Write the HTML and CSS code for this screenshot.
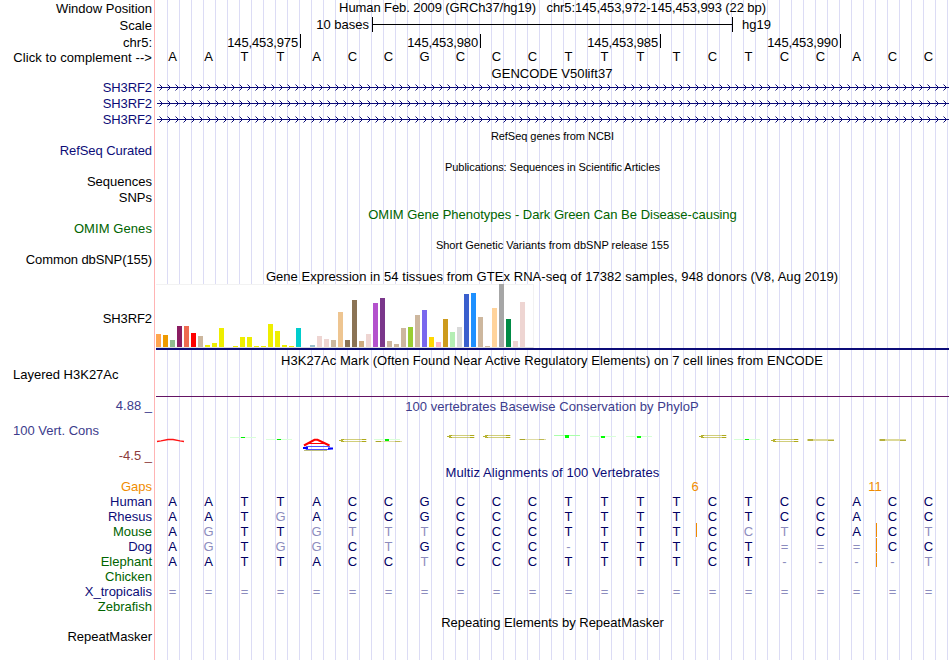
FILE: index.html
```html
<!DOCTYPE html>
<html lang="en">
<head>
  <meta charset="UTF-8" />
  <title>chr5:145,453,972-145,453,993</title>
  <link rel="stylesheet" href="styles.css">
</head>

<body>
  <main class="browser">
    <div class="row h17">
      <div class="label">Window Position</div>
      <div class="track title up"><span class="t-pos">Human Feb. 2009 (GRCh37/hg19) &nbsp; chr5:145,453,972-145,453,993 (22 bp)</span></div>
    </div>
    <div class="row h17">
      <div class="label">Scale</div>
      <div class="track scale up">
        <span class="scale-size">10 bases</span>
        <span class="scale-bar"></span>
        <span>hg19</span>
      </div>
    </div>
    <div class="row">
      <div class="label">chr5:</div>
      <div class="track ruler">
        <span>145,453,975</span><span>145,453,980</span><span>145,453,985</span><span>145,453,990</span>
      </div>
    </div>
    <div class="row h15">
      <div class="label t-click">Click to complement --&gt;</div>
      <div class="track bases black" data-seq="AATTACCGCCCTTTTCTCCACC"></div>
    </div>

    <div class="row h14"><div class="label"></div><div class="track title"><span class="t-gencode">GENCODE V50lift37</span></div></div>
    <div class="row gene"><div class="label">SH3RF2</div><div class="track"></div></div>
    <div class="row gene"><div class="label">SH3RF2</div><div class="track"></div></div>
    <div class="row gene"><div class="label">SH3RF2</div><div class="track"></div></div>

    <div class="row"><div class="label"></div><div class="track title small"><span class="t-refseq">RefSeq genes from NCBI</span></div></div>
    <div class="row h15"><div class="label navy t-curated">RefSeq Curated</div><div class="track"></div></div>
    <div class="row"><div class="label"></div><div class="track title small"><span class="t-pubs">Publications: Sequences in Scientific Articles</span></div></div>
    <div class="row"><div class="label up">Sequences</div><div class="track"></div></div>
    <div class="row"><div class="label up">SNPs</div><div class="track"></div></div>
    <div class="row h15"><div class="label"></div><div class="track title down green"><span class="t-omim">OMIM Gene Phenotypes - Dark Green Can Be Disease-causing</span></div></div>
    <div class="row h15"><div class="label green t-omim-label">OMIM Genes</div><div class="track"></div></div>
    <div class="row"><div class="label"></div><div class="track title small"><span class="t-dbsnp">Short Genetic Variants from dbSNP release 155</span></div></div>
    <div class="row h15"><div class="label t-common">Common dbSNP(155)</div><div class="track"></div></div>

    <div class="row h17"><div class="label"></div><div class="track title low"><span class="t-gtex">Gene Expression in 54 tissues from GTEx RNA-seq of 17382 samples, 948 donors (V8, Aug 2019)</span></div></div>
    <div class="row gtex">
      <div class="label">SH3RF2</div>
      <div class="track"><div class="bars" id="gtex-bars"></div></div>
    </div>

    <div class="row h17 h3k-title"><div class="label"></div><div class="track title"><span class="t-h3k">H3K27Ac Mark (Often Found Near Active Regulatory Elements) on 7 cell lines from ENCODE</span></div></div>
    <div class="row h3k"><div class="label left">Layered H3K27Ac</div><div class="track"></div></div>

    <div class="row cons">
      <div class="label">
        <span class="max">4.88 _</span>
        <span class="name">100 Vert. Cons</span>
        <span class="min">-4.5 _</span>
      </div>
      <div class="track">
        <div class="title"><span class="t-phylop">100 vertebrates Basewise Conservation by PhyloP</span></div>
        <!-- sequence logo, letters squashed to their score -->
        <svg class="logo" width="795" height="49" viewBox="0 0 795 49">
          <defs>
            <g id="t">
              <rect x="0" y="0" width="26" height="1" fill="#d9ffd9" />
              <rect x="11" y="0" width="4" height="1" fill="#00f000" />
            </g>
            <g id="c" fill="none" stroke="#b9b432">
              <path d="M27.5 .5H4M27.5 2.5H4" opacity=".65" />
              <path d="M5 .5H2M5 2.5H2M0 1.5H4M23 .5H27M23 2.5H27" stroke="#a5a000" opacity=".8" />
            </g>
            <g id="flat">
              <rect width="27" height="2" fill="#dcd999" />
              <rect x="1" width="5" height="2" fill="#b4af3c" />
              <rect x="21" y="1" width="6" height="1" fill="#b4af3c" />
            </g>
            <g id="thin">
              <rect width="27" height="1" fill="#dedba5" />
              <rect x="1" width="5" height="1" fill="#aaa528" />
              <rect x="20" width="5" height="1" fill="#beb950" />
            </g>
          </defs>
          <path d="M2 27.5L6 26.9L13 25.5H18L25 26.9L29 27.5" fill="none" stroke="#ff1414" stroke-width="1.3" />
          <use href="#t" x="75" y="23" />
          <use href="#t" x="111" y="25" />
          <path d="M149 31.500L159.500 25.800H162.500L174.500 31.500" fill="none" stroke="#f00" stroke-width="2" />
          <path d="M154 29.500H169" stroke="#f00" />
          <path d="M175 32.500H151L149.500 34L151 35.500H173L177 34.500" fill="none" stroke="#5050ff" />
          <path d="M148 34H153M173 34.500H178" stroke="#00f" stroke-width="2" />
          <rect x="149" y="36" width="23" height="1" fill="#bebe82" />
          <use href="#c" x="184" y="25" />
          <use href="#thin" x="220" y="27" />
          <use href="#t" x="219" y="25" />
          <rect x="230" y="25" width="4" height="2" fill="#00f000" />
          <use href="#c" x="292" y="21" />
          <use href="#c" x="328" y="21" />
          <use href="#thin" x="364" y="25" />
          <rect x="399" y="21" width="26" height="1" fill="#aaffaa" />
          <rect x="410" y="21" width="4" height="3" fill="#0f0" />
          <use href="#t" x="435" y="22" />
          <rect x="446" y="22" width="4" height="2" fill="#0f0" />
          <use href="#t" x="471" y="22" />
          <rect x="482" y="22" width="4" height="2" fill="#0f0" />
          <use href="#c" x="544" y="21" />
          <use href="#t" x="579" y="25" />
          <use href="#c" x="616" y="25" />
          <use href="#flat" x="652" y="25" />
          <use href="#flat" x="724" y="25" />
        </svg>
      </div>
    </div>

    <div class="row h17 multiz-title"><div class="label"></div><div class="track title navy"><span class="t-multiz">Multiz Alignments of 100 Vertebrates</span></div></div>
    <div class="row species"><div class="label orange">Gaps</div><div class="track bases" data-gaps="15:6,20:11"></div></div>
    <div class="row species"><div class="label navy">Human</div><div class="track bases" data-seq="AATTACCGCCCTTTTCTCCACC"></div></div>
    <div class="row species"><div class="label navy">Rhesus</div><div class="track bases" data-seq="AATGACCGCCCTTTTCTCCACC"></div></div>
    <div class="row species"><div class="label green">Mouse</div><div class="track bases" data-seq="AGTTGTTTCCCTTTTCCTCACT" data-inserts="15,20"></div></div>
    <div class="row species"><div class="label navy">Dog</div><div class="track bases" data-seq="AGTGGCTGCCC-TTTCT===CC" data-inserts="20"></div></div>
    <div class="row species"><div class="label green">Elephant</div><div class="track bases" data-seq="AATTACCTCCCTTTTCT----T" data-inserts="20"></div></div>
    <div class="row species"><div class="label green">Chicken</div><div class="track"></div></div>
    <div class="row species"><div class="label navy">X_tropicalis</div><div class="track bases" data-seq="======================"></div></div>
    <div class="row species"><div class="label green">Zebrafish</div><div class="track"></div></div>

    <div class="row h15"><div class="label"></div><div class="track title"><span class="t-rmsk">Repeating Elements by RepeatMasker</span></div></div>
    <div class="row species"><div class="label">RepeatMasker</div><div class="track"></div></div>
  </main>

  <script src="script.js"></script>
</body>
</html>
```
FILE: styles.css
```css
* {
  box-sizing: border-box;
}

body {
  margin: 0;
  background: #fff;
  color: #000;
  font-family: "Liberation Sans", Arial, Helvetica, sans-serif;
  font-size: 13px;
}

/* guide lines every 12px, red line between labels and data */
.browser {
  width: 950px;
  height: 660px;
  overflow: hidden;
  background:
    linear-gradient(#ffb4b4, #ffb4b4) 154px 0 / 1px 100% no-repeat,
    repeating-linear-gradient(to right, #dcdcf5 0 1px, transparent 1px 12px) 167px 0 / 783px 100% no-repeat;
}

.row {
  display: grid;
  grid-template-columns: 155px 795px;
  height: 16px;
  line-height: 17px;
  white-space: nowrap;
}

.h14 { height: 14px; }
.h15 { height: 15px; line-height: 15px; }
.h17 { height: 17px; }
.species { height: 15px; line-height: 13px; }

.label {
  padding-right: 3px;
  text-align: right;
}

.label.left {
  padding-left: 13px;
  text-align: left;
}

.title {
  text-align: center;
}

.up { line-height: 15px; }
.down { line-height: 17px; }
.low { line-height: 19px; }
.small { font-size: 11px; line-height: 19px; }

.navy { color: #0c0c78; }
.green { color: #006400; }
.orange { color: #f08c00; }

/* track name widths */
.t-pos { letter-spacing: -0.09px; }
.t-click { letter-spacing: 0.08px; }
.t-gencode { letter-spacing: 0.06px; }
.t-curated { letter-spacing: -0.07px; }
.t-omim-label { letter-spacing: 0.08px; }
.t-refseq { letter-spacing: -0.04px; }
.t-pubs { letter-spacing: -0.06px; }
.t-common { letter-spacing: -0.1px; }
.t-gtex { letter-spacing: 0.055px; }
.t-h3k { letter-spacing: 0.05px; }
.t-phylop { letter-spacing: 0.03px; }
.t-multiz { letter-spacing: 0.08px; }

.t-gencode, .t-gtex, .t-h3k, .t-phylop {
  margin-right: 1px;
}

/* scale + ruler */
.scale {
  display: flex;
}

.scale-size {
  width: 214px;
  margin-right: 3px;
  text-align: right;
}

.scale-bar {
  width: 361px;
  height: 15px;
  margin-right: 9px;
  border: solid #000;
  border-width: 0 1px;
  background: linear-gradient(#000, #000) 0 7px / 100% 1px no-repeat;
}

.ruler {
  display: flex;
  letter-spacing: -0.14px;
}

.ruler span {
  width: 180px;
  height: 14px;
  padding-right: 2px;
  border-right: 1px solid #000;
  text-align: right;
}

.ruler span:first-child {
  width: 146px;
}

/* bases */
.bases {
  display: grid;
  grid-template-columns: repeat(22, 36px);
  color: #000064;
  line-height: 13px;
}

.bases.black { color: #000; }

.base {
  position: relative;
  padding-right: 1px;
  text-align: center;
}

.diff { color: #8c8cbe; }

.insert {
  position: absolute;
  left: 1px;
  top: -2px;
  width: 1px;
  height: 14px;
  background: #f08c00;
}

.gap-count {
  position: absolute;
  left: -18px;
  width: 36px;
  color: #f08c00;
}

/* genes */
.gene .label {
  color: #0c0c78;
  letter-spacing: -0.1px;
}

.gene .track {
  margin-left: 2px;
  margin-right: 1px;
  background:
    linear-gradient(#0c0c78, #0c0c78) 0 8px / 100% 1px no-repeat,
    url("data:image/svg+xml,%3Csvg xmlns='http://www.w3.org/2000/svg' width='8' height='16'%3E%3Cpath d='M2.500 5.500L5.500 8.500L2.500 11.500' fill='none' stroke='%230c0c78'/%3E%3C/svg%3E") 0 0 repeat-x;
}

/* expression bars */
.gtex {
  height: 66px;
}

.gtex .label {
  padding-top: 26px;
  letter-spacing: -0.1px;
}

.gtex .track {
  margin-left: 1px;
  margin-right: 1px;
  border-bottom: 2px solid #0c0c78;
}

.bars {
  display: flex;
  align-items: flex-end;
  gap: 2px;
  width: 378px;
  height: 64px;
  border: 1px solid #f2f2f2;
  border-left: 0;
  border-bottom-color: #dcdcdc;
  background: #fff;
}

.bar {
  flex: 0 0 5px;
}

.h3k-title { line-height: 21px; }

.h3k {
  height: 31px;
  line-height: 15px;
}

.h3k .track {
  height: 30px;
  margin-left: 1px;
  margin-right: 1px;
  border-bottom: 1px solid #641464;
}

/* conservation */
.cons {
  height: 65px;
  color: #3c3c8c;
}

.cons .label {
  display: flex;
  flex-direction: column;
  gap: 9px;
  line-height: 16px;
  text-align: right;
}

.cons .name {
  padding-left: 13px;
  text-align: left;
}

.cons .min { color: #8c3c3c; }

.cons .title {
  height: 16px;
}

.logo {
  display: block;
}

.multiz-title { line-height: 19px; }
```
FILE: script.js
```js
const human = "AATTACCGCCCTTTTCTCCACC";

document.querySelectorAll(".bases").forEach(track => {
  const seq = track.dataset.seq || " ".repeat(22);
  const inserts = (track.dataset.inserts || "").split(",");
  const gaps = Object.fromEntries((track.dataset.gaps || "").split(",").map(g => g.split(":")));

  [...seq].forEach((base, i) => {
    const cell = document.createElement("span");
    cell.className = base === human[i] ? "base" : "base diff";
    cell.textContent = base;

    if (inserts.includes(String(i))) {
      const mark = document.createElement("i");
      mark.className = "insert";
      cell.appendChild(mark);
    }
    if (gaps[i]) {
      const count = document.createElement("span");
      count.className = "gap-count";
      count.textContent = gaps[i];
      cell.appendChild(count);
    }
    track.appendChild(cell);
  });
});

// [height, colour] for each tissue
const tissues = [
  [13, "#ffa54f"], [12, "#ee9a00"], [7, "#8fbc8f"], [21, "#8b1c62"], [21, "#ee6a50"],
  [14, "#ff0000"], [11, "#cdb79e"], [2, "#eeee00"], [4, "#eeee00"], [19, "#eeee00"],
  [0, "#eeee00"], [1, "#eeee00"], [10, "#eeee00"], [10, "#eeee00"], [1, "#eeee00"],
  [1, "#eeee00"], [23, "#eeee00"], [16, "#eeee00"], [2, "#eeee00"], [1, "#eeee00"],
  [19, "#00cdcd"], [0, "#ee82ee"], [2, "#9ac0cd"], [11, "#eed5d2"], [8, "#eed5d2"],
  [7, "#cdb79e"], [35, "#eec591"], [7, "#8b7355"], [47, "#8b7355"], [6, "#cdaa7d"],
  [13, "#eed5d2"], [44, "#b452cd"], [49, "#7a378b"], [6, "#cdb79e"], [3, "#cdb79e"],
  [19, "#cdb79e"], [20, "#9acd32"], [32, "#cdb79e"], [37, "#7a67ee"], [10, "#ffd700"],
  [5, "#ffb6c1"], [28, "#cd9b1d"], [15, "#b4eeb4"], [20, "#d9d9d9"], [53, "#3a5fcd"],
  [54, "#1e90ff"], [30, "#cdb79e"], [1, "#cdb79e"], [39, "#ffd39b"], [63, "#a6a6a6"],
  [28, "#008b45"], [6, "#eed5d2"], [45, "#eed5d2"], [0, "#ff00ff"]
];

const bars = document.getElementById("gtex-bars");
tissues.forEach(([height, colour]) => {
  const bar = document.createElement("span");
  bar.className = "bar";
  bar.style.height = height + "px";
  bar.style.background = colour;
  bars.appendChild(bar);
});
```
